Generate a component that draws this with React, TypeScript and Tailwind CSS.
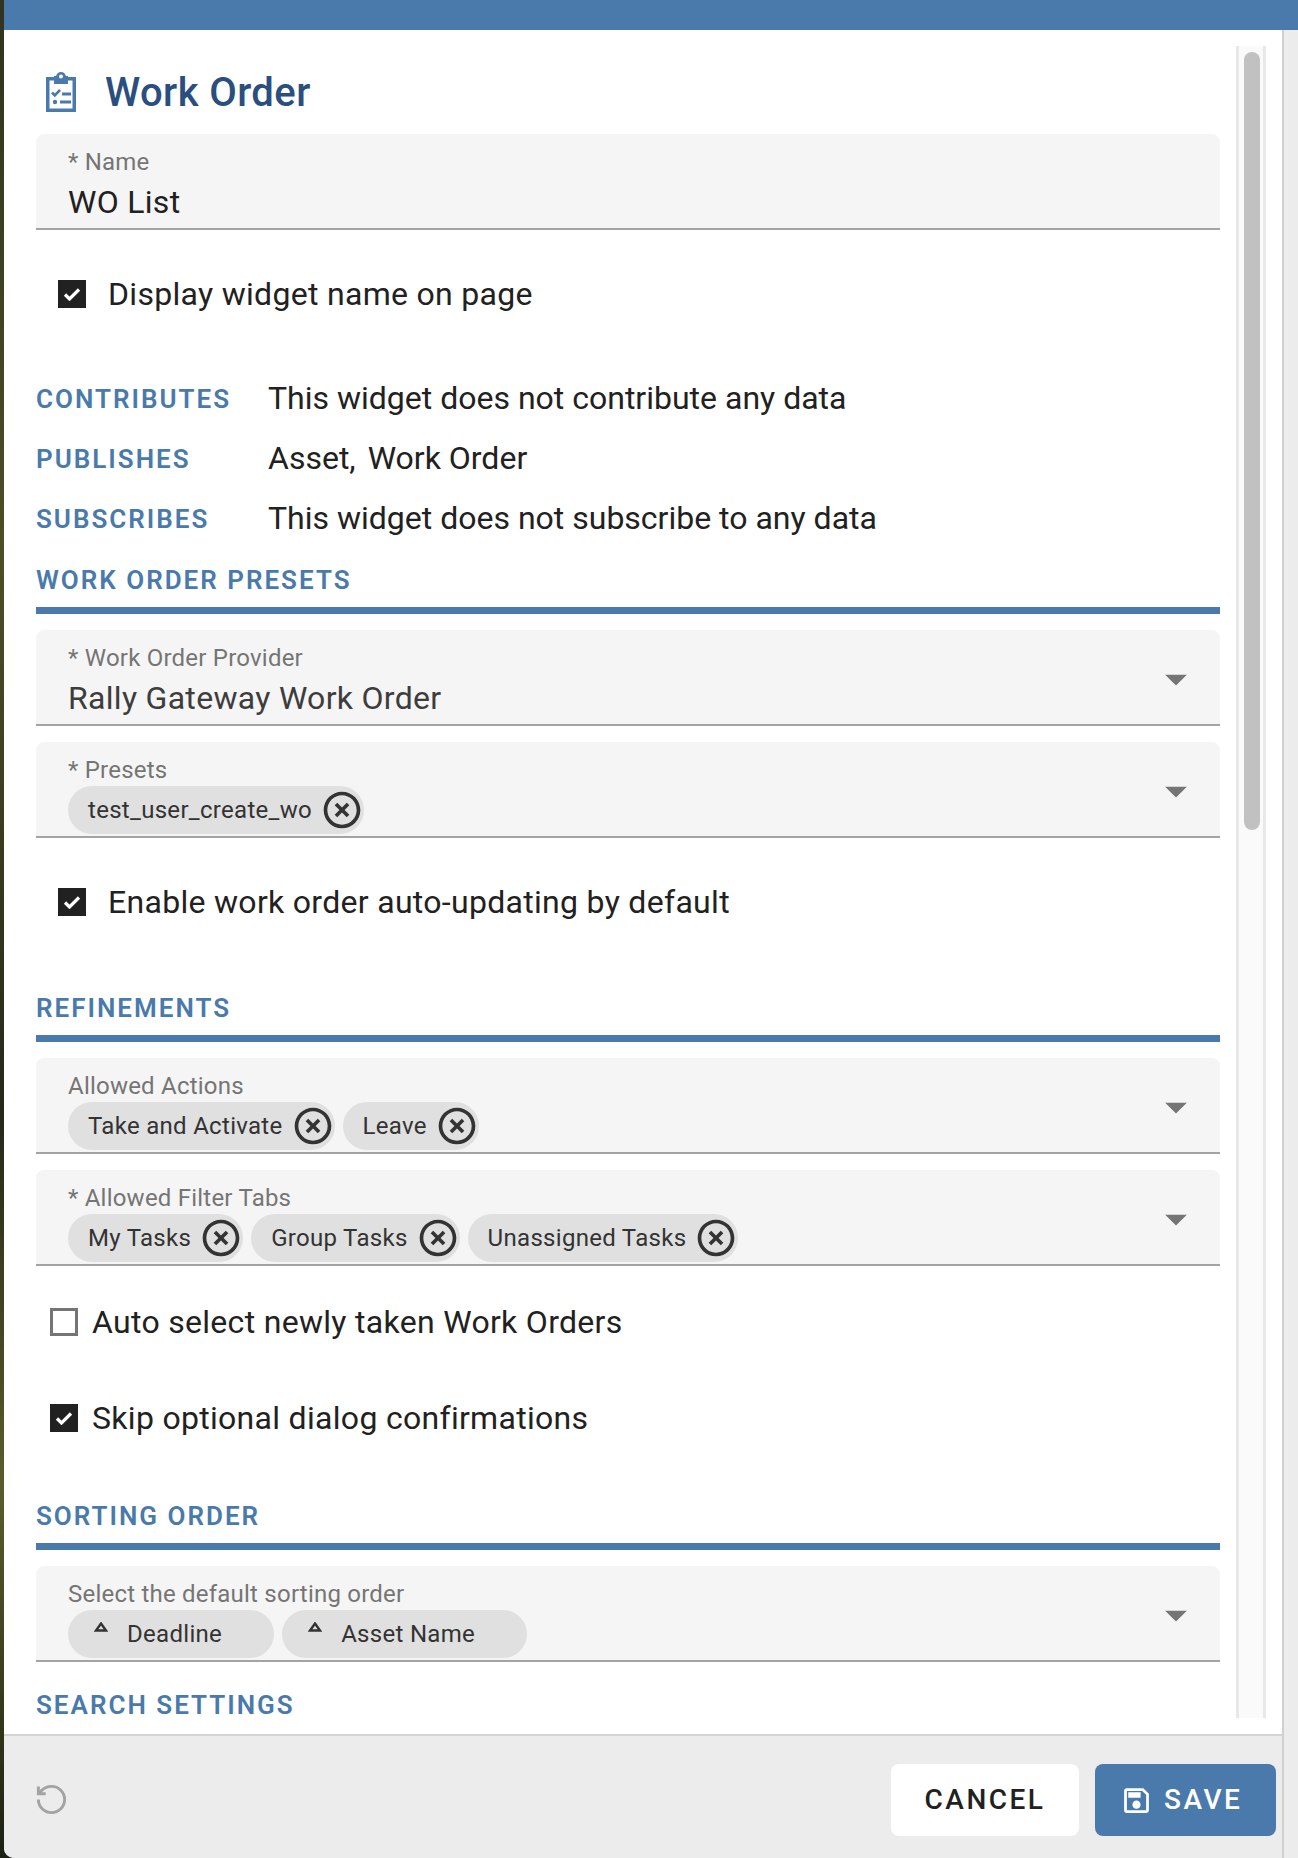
import { MdArrowDropDown, MdHighlightOff, MdOutlineSave } from "react-icons/md";
import { RotateCcw } from "lucide-react";

const BLUE = "text-[#4a7aab]";

function Field({ label, value, chips, children, select = false, muted = false }: { label: string; value?: string; chips?: string[]; children?: React.ReactNode; select?: boolean; muted?: boolean }) {
  return (
    <div className="relative mb-4 h-24 shrink-0 rounded-t-lg border-b-2 border-[#a3a3a3] bg-[#f5f5f5] px-8 pt-3.5">
      <div className="text-[24px] leading-7 tracking-[0.22px] text-[#757575]">{label}</div>
      {value && <div className={`mt-1.5 text-[32px] leading-10 tracking-[0.3px] ${muted ? "text-[#3d3d3d]" : "text-[#212121]"}`}>{value}</div>}
      {chips && (
        <div className="mt-0.5 flex gap-2">
          {chips.map((c) => (
            <div key={c} className="flex h-12 items-center rounded-full bg-[#e0e0e0] pl-5 text-[24px] tracking-[0.3px] text-[#333333]">
              {c}
              <MdHighlightOff className="ml-2 text-[#333333]" size={44} />
            </div>
          ))}
        </div>
      )}
      {children}
      {select && <MdArrowDropDown className="absolute right-[18px] top-[23px] text-[#757575]" size={52} />}
    </div>
  );
}

function SortChip({ text }: { text: string }) {
  return (
    <div className="flex h-12 items-center rounded-full bg-[#e0e0e0] pl-[26px] pr-[52px] text-[24px] tracking-[0.3px] text-[#333333]">
      <svg width="14" height="10" viewBox="0 0 14 10" className="mb-3.5 mr-[19px]">
        <path d="M7 1.5 12 8.5H2Z" fill="none" stroke="#333333" strokeWidth="2.4" />
      </svg>
      {text}
    </div>
  );
}

function Check({ label, checked = true, className }: { label: string; checked?: boolean; className: string }) {
  return (
    <div className={`flex h-16 shrink-0 items-center text-[32px] tracking-[0.3px] text-[#212121] ${className}`}>
      {checked ? (
        <div className="flex size-7 items-center justify-center bg-[#212121]">
          <svg width="18" height="14" viewBox="0 0 18 14">
            <path d="M2 7.5 6.5 12 16 2.5" fill="none" stroke="white" strokeWidth="3.2" />
          </svg>
        </div>
      ) : (
        <div className="size-7 border-[3px] border-[#757575]" />
      )}
      {label}
    </div>
  );
}

function Heading({ text, className = "" }: { text: string; className?: string }) {
  return (
    <div className={`h-[66px] shrink-0 border-b-[7px] border-[#4a7aab] pt-3.5 text-[26px] font-semibold uppercase leading-9 tracking-[2px] ${BLUE} ${className}`}>
      {text}
    </div>
  );
}

function Info({ label, children }: { label: string; children: React.ReactNode }) {
  return (
    <div className="flex h-[60px] shrink-0 items-center">
      <div className={`mt-[3px] w-[232px] text-[26px] font-semibold uppercase tracking-[2px] ${BLUE}`}>{label}</div>
      <div className="text-[32px] text-[#212121]">{children}</div>
    </div>
  );
}

export default function App() {
  return (
    <div className="flex h-[1858px] w-[1298px] overflow-hidden bg-[linear-gradient(180deg,#2f3320,#4c4f26_30%,#25281a_60%,#5a5d2a_80%,#1c2014)] font-['Roboto',sans-serif]">
      <div className="w-1 shrink-0" />
      <div className="flex flex-1 flex-col overflow-hidden rounded-bl-[10px]">
        <div className="h-[30px] shrink-0 bg-[#4a7aab]" />
        <div className="flex flex-1">
          <div className="flex w-[1280px] flex-col border-r-2 border-[#d0d0d0] bg-white">
            <div className="flex h-[1704px] gap-4 py-4 pl-8 pr-4">
              <div className="flex w-[1184px] flex-col">
                <div className="flex h-[88px] shrink-0 items-center pt-1">
                  <svg width="30" height="40" viewBox="0 0 30 40" className="ml-[10px] mr-[29px]">
                    <path fillRule="evenodd" fill="#4a7aab" d="M0 5h10a5 5 0 0 1 10 0h10v35H0ZM3.5 8.500v28h23v-28Z" />
                    <path fill="#4a7aab" d="M8 4h14v8H8Z" />
                    <circle cx="15" cy="4.500" r="2" fill="white" />
                    <path d="M6 20.500l2.800 2.800L14 18" fill="none" stroke="#4a7aab" strokeWidth="2.600" />
                    <path d="M16 22h9M14 30h11" fill="none" stroke="#4a7aab" strokeWidth="3" />
                    <circle cx="9" cy="30" r="2.200" fill="#4a7aab" />
                  </svg>
                  <div className="mt-0.5 text-[40px] font-medium tracking-[0.4px] text-[#2a4f7f]">Work Order</div>
                </div>
                <Field label="* Name" value="WO List" />
                <Check label="Display widget name on page" className="mt-4 pl-[22px] [&>div]:mr-[22px]" />
                <div className="mt-[42px]">
                  <Info label="Contributes">This widget does not contribute any data</Info>
                  <Info label="Publishes">
                    <span>Asset,</span>
                    <span className="ml-[12px]">Work Order</span>
                  </Info>
                  <Info label="Subscribes">This widget does not subscribe to any data</Info>
                </div>
                <Heading text="Work Order Presets" className="mb-4" />
                <Field label="* Work Order Provider" value="Rally Gateway Work Order" select muted />
                <Field label="* Presets" chips={["test_user_create_wo"]} select />
                <Check label="Enable work order auto-updating by default" className="mt-4 pl-[22px] [&>div]:mr-[22px]" />
                <Heading text="Refinements" className="mb-4 mt-[42px]" />
                <Field label="Allowed Actions" chips={["Take and Activate", "Leave"]} select />
                <Field label="* Allowed Filter Tabs" chips={["My Tasks", "Group Tasks", "Unassigned Tasks"]} select />
                <Check label="Auto select newly taken Work Orders" checked={false} className="mt-2 pl-[14px] [&>div]:mr-[14px]" />
                <Check label="Skip optional dialog confirmations" className="mt-8 pl-[14px] [&>div]:mr-[14px]" />
                <Heading text="Sorting Order" className="mb-4 mt-[34px]" />
                <Field label="Select the default sorting order" select>
                  <div className="mt-0.5 flex gap-2">
                    <SortChip text="Deadline" />
                    <SortChip text="Asset Name" />
                  </div>
                </Field>
                <div className={`-mt-[5px] shrink-0 pt-[19px] text-[26px] font-semibold uppercase leading-[26px] tracking-[2px] ${BLUE}`}>Search Settings</div>
              </div>
              <div className="w-[30px] shrink-0 border-x-[3px] border-x-[#e8e8e8] bg-[#fafafa] pl-[5px] pt-1.5">
                <div className="h-[778px] w-4 rounded-full bg-[#c1c1c1]" />
              </div>
            </div>
            <div className="flex flex-1 items-start justify-between border-t-2 border-[#d4d4d4] bg-[#ececec] pl-[30px] pr-1.5 pt-7">
              <RotateCcw className="mt-[18px] text-[#a3a3a3]" size={35} strokeWidth={2} strokeLinecap="butt" strokeLinejoin="miter" />
              <div className="flex gap-4">
                <button className="flex h-[72px] w-[188px] items-center justify-center rounded-lg bg-white text-[28px] font-medium tracking-[2.5px] text-[#212121]">CANCEL</button>
                <button className="flex h-[72px] w-[181px] items-center gap-[11px] rounded-lg bg-[#4a7aab] pl-[25px] text-[28px] font-medium tracking-[2.5px] text-white">
                  <MdOutlineSave size={33} />
                  SAVE
                </button>
              </div>
            </div>
          </div>
          <div className="flex-1 bg-[#ececec]" />
        </div>
      </div>
    </div>
  );
}
